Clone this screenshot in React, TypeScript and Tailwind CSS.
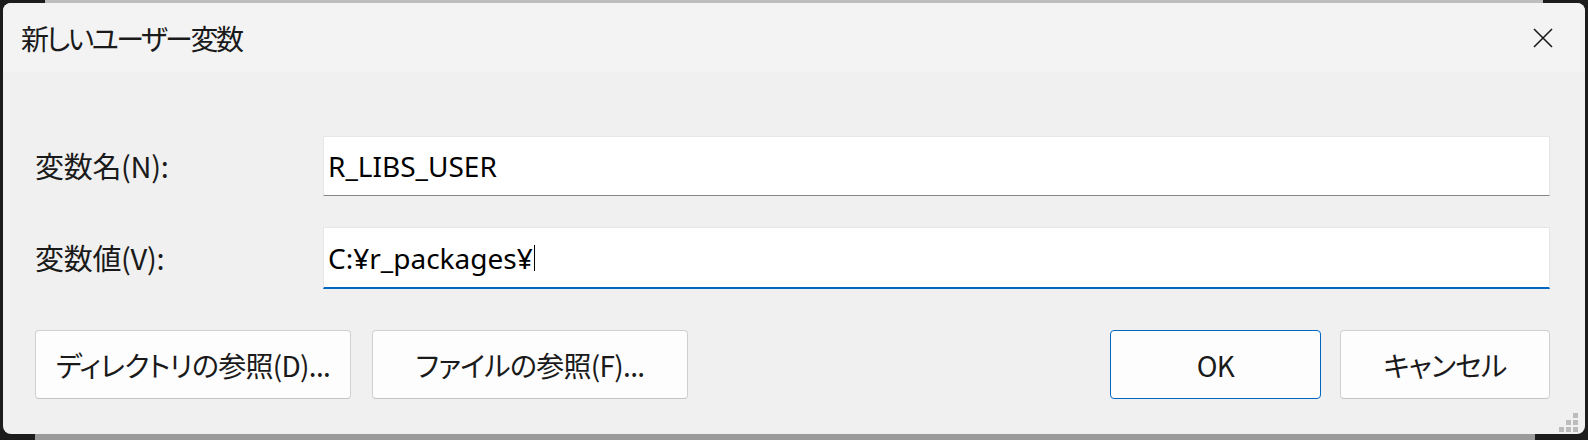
import React from 'react';

const jp = "font-['Noto_Sans_CJK_JP','Noto_Sans',sans-serif] [font-feature-settings:'palt']";
const latin = "font-['Noto_Sans','Noto_Sans_CJK_JP',sans-serif]";

const Field: React.FC<{ label: string; value: string; focused?: boolean }> = ({ label, value, focused }) => (
  <div className="flex items-center">
    <div className={`w-[288px] text-[29px] tracking-[-0.3px] text-[#1a1a1a] ${jp}`}>{label}</div>
    <div
      className={
        focused
          ? 'flex-1 h-[62px] bg-white border border-[#e6e6e6] border-b-2 border-b-[#0067c0] flex items-center pl-[4px]'
          : 'flex-1 h-[60px] bg-white border border-[#e6e6e6] border-b-[#868686] flex items-center pl-[4px]'
      }
    >
      <span className={`text-[28px] text-black ${latin}`}>{value}</span>
      {focused && <span className="w-px h-[26px] bg-black ml-[1px]" />}
    </div>
  </div>
);

const Btn: React.FC<{ label: string; w: string; primary?: boolean }> = ({ label, w, primary }) => (
  <button
    className={`${w} h-[69px] rounded-[4px] bg-[#fdfdfd] border ${
      primary ? 'border-[#0067c0]' : 'border-[#d0d0d0] border-b-[#c4c4c4]'
    } text-[28px] tracking-[-0.7px] text-[#1a1a1a] ${jp} flex items-center justify-center`}
  >
    {label}
  </button>
);

export default function App() {
  return (
    <div className="w-[1588px] h-[440px] bg-[#1c1c1c] flex flex-col overflow-hidden">
      <div className="h-[3px] shrink-0 flex">
        <div className="ml-[45px] w-[1498px] bg-[#bdbdbd]" />
      </div>

      <div className="relative mx-[3px] h-[431px] shrink-0 rounded-[8px] overflow-hidden bg-[#f0f0f0] flex flex-col">
        <div className="h-[69px] shrink-0 bg-[#f3f3f3] flex items-center justify-between pl-[18px] pr-[32px]">
          <span className={`text-[28px] tracking-[-2.5px] text-[#1a1a1a] ${jp}`}>新しいユーザー変数</span>
          <svg width="20" height="20" viewBox="0 0 20 20">
            <path d="M1 1L19 19M19 1L1 19" stroke="#1a1a1a" strokeWidth="1.6" fill="none" />
          </svg>
        </div>

        <div className="flex-1 flex flex-col pl-[32px] pr-[35px] pt-[64px]">
          <Field label="変数名(N):" value="R_LIBS_USER" />
          <div className="mt-[31px]">
            <Field label="変数値(V):" value="C:¥r_packages¥" focused />
          </div>

          <div className="mt-[41px] flex justify-between">
            <div className="flex gap-[21px]">
              <Btn label="ディレクトリの参照(D)..." w="w-[316px]" />
              <Btn label="ファイルの参照(F)..." w="w-[316px]" />
            </div>
            <div className="flex gap-[19px]">
              <Btn label="OK" w="w-[211px]" primary />
              <Btn label="キャンセル" w="w-[210px]" />
            </div>
          </div>
        </div>

        <svg className="absolute right-[7px] bottom-[2px]" width="19" height="19" viewBox="0 0 19 19">
          <rect x="14" y="0" width="5" height="5" fill="#bcbcbc" />
          <rect x="7" y="7" width="5" height="5" fill="#bcbcbc" />
          <rect x="14" y="7" width="5" height="5" fill="#bcbcbc" />
          <rect x="0" y="14" width="5" height="5" fill="#bcbcbc" />
          <rect x="7" y="14" width="5" height="5" fill="#bcbcbc" />
          <rect x="14" y="14" width="5" height="5" fill="#bcbcbc" />
        </svg>
      </div>

      <div className="h-[6px] shrink-0 flex">
        <div className="ml-[35px] w-[1500px] bg-[#9a9a9a]" />
      </div>
    </div>
  );
}
